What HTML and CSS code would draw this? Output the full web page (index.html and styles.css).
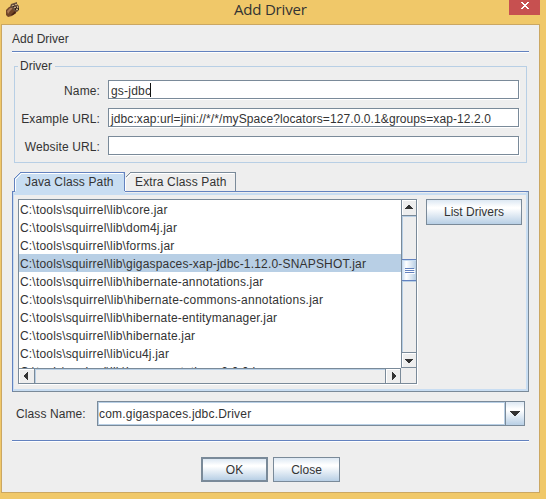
FILE: index.html
```
<!DOCTYPE html>
<html lang="en">
<head>
<meta charset="utf-8">
<title>Add Driver</title>
<link rel="stylesheet" href="styles.css">
</head>
<body>
<div class="window">
  <header class="titlebar">
    <svg class="acorn" width="16" height="16" viewBox="0 0 16 16">
      <path d="M1 13 L1 8 L4 5 L8 4 L12 8 L11 11 L7 14 L3 15 Z" fill="#704528"/>
      <path d="M2 9 L5 6 L8 6 L5 9 L3 12 Z" fill="#a87958"/>
      <path d="M6 13 L10 9 L11 11 L8 13 Z" fill="#482313"/>
      <path d="M5 5 L6 2 L9 1 L12 0 L12 2 L14 4 L14 8 L12 10 L9 9 L7 6 Z" fill="#69503e"/>
      <path d="M7 3h2v1h-2zM10 2h2v1h-2zM9 5h2v1h-2zM12 4h1v2h-1zM11 7h2v1h-2z" fill="#c5a980"/>
      <path d="M8 4h1v1h-1zM11 5h1v1h-1zM10 6h1v2h-1zM13 6h1v2h-1z" fill="#2f2118"/>
    </svg>
    <h1 class="title"><span>Add Driver</span></h1>
    <div class="win-close"><svg width="8" height="7" viewBox="0 0 8 7" shape-rendering="crispEdges"><path d="M0 0h2v1h1v1h2v-1h1v-1h2v1h-1v1h-1v1h-1v1h1v1h1v1h1v1h-2v-1h-1v-1h-2v1h-1v1h-2v-1h1v-1h1v-1h1v-1h-1v-1h-1v-1h-1z" fill="#fff"/></svg></div>
  </header>
  <main class="client">
    <div class="heading"><span>Add Driver</span></div>
    <section class="group">
      <h2 class="legend">Driver</h2>
      <div class="field"><label>Name:</label><div class="input"><span class="v-name">gs-jdbc</span><i class="caret"></i></div></div>
      <div class="field"><label class="l-example">Example URL:</label><div class="input"><span class="v-url">jdbc:xap:url=jini://*/*/mySpace?locators=127.0.0.1&amp;groups=xap-12.2.0</span></div></div>
      <div class="field"><label class="l-website">Website URL:</label><div class="input"></div></div>
    </section>
    <div class="tabs">
      <svg class="tab-shapes" width="226" height="22" viewBox="0 0 226 22" shape-rendering="crispEdges">
        <path d="M2.5 21V6.500L8.500.5H112.500V21Z" fill="#c8ddf2"/>
        <path d="M3.500 19V7.500L9.500 1.500H111" fill="none" stroke="#fff"/>
        <path d="M2.500 19V6.500L8.500.5H112.500V19" fill="none" stroke="#6382bf"/>
        <path d="M113.500 19V7.500L119.500 1.500H222" fill="none" stroke="#fff"/>
        <path d="M113.500 5.500L118.500.5H223.500V19" fill="none" stroke="#7a8a99"/>
      </svg>
      <div class="tab t-java"><span>Java Class Path</span></div>
      <div class="tab t-extra"><span>Extra Class Path</span></div>
    </div>
    <section class="pane">
      <div class="scroller">
        <ul class="list">
          <li><span>C:\tools\squirrel\lib\core.jar</span></li>
          <li><span>C:\tools\squirrel\lib\dom4j.jar</span></li>
          <li><span>C:\tools\squirrel\lib\forms.jar</span></li>
          <li class="selected"><span>C:\tools\squirrel\lib\gigaspaces-xap-jdbc-1.12.0-SNAPSHOT.jar</span></li>
          <li><span>C:\tools\squirrel\lib\hibernate-annotations.jar</span></li>
          <li class="wide"><span>C:\tools\squirrel\lib\hibernate-commons-annotations.jar</span></li>
          <li><span>C:\tools\squirrel\lib\hibernate-entitymanager.jar</span></li>
          <li><span>C:\tools\squirrel\lib\hibernate.jar</span></li>
          <li><span>C:\tools\squirrel\lib\icu4j.jar</span></li>
          <li><span>C:\tools\squirrel\lib\java-annotations-2.0.0.jar</span></li>
        </ul>
        <div class="vbar">
          <div class="up"><svg width="8" height="4" shape-rendering="crispEdges"><path d="M3 0h2v1h1v1h1v1h1v1H0V3h1V2h1V1h1z" fill="#333"/></svg></div>
          <div class="vtrack"><div class="thumb"><i></i><i></i><i></i></div></div>
          <div class="down"><svg width="8" height="4" shape-rendering="crispEdges"><path d="M0 0h8v1h-1v1h-1v1h-1v1H3V3H2V2H1V1H0z" fill="#333"/></svg></div>
        </div>
        <div class="hbar">
          <div class="left"><svg width="4" height="8" shape-rendering="crispEdges"><path d="M4 0v8H3V7H2V6H1V5H0V3h1V2h1V1h1V0z" fill="#333"/></svg></div>
          <div class="htrack"></div>
          <div class="right"><svg width="4" height="8" shape-rendering="crispEdges"><path d="M0 0h1v1h1v1h1v1h1v2H3v1H2v1H1v1H0z" fill="#333"/></svg></div>
        </div>
        <div class="corner"></div>
      </div>
      <button class="btn list-drivers"><span>List Drivers</span></button>
    </section>
    <div class="class-row">
      <label>Class Name:</label>
      <div class="combo">
        <div class="combo-text"><span>com.gigaspaces.jdbc.Driver</span></div>
        <div class="combo-arrow"><svg width="10" height="5" shape-rendering="crispEdges"><path d="M0 0h10v1H9v1H8v1H7v1H6v1H4V4H3V3H2V2H1V1H0z" fill="#333"/></svg></div>
      </div>
    </div>
    <footer class="actions">
      <button class="btn ok"><span>OK</span></button>
      <button class="btn close"><span>Close</span></button>
    </footer>
  </main>
</div>
</body>
</html>
```
FILE: styles.css
```
* { box-sizing: border-box; }
body {
  margin: 0;
  font: 12px/18px "Liberation Sans", Arial, sans-serif;
  color: #333;
  white-space: nowrap;
}
svg { display: block; }
.window {
  width: 546px;
  height: 499px;
  background: #f0c869;
  padding: 0 6px 6px 1px;
  overflow: hidden;
}
.titlebar { display: flex; height: 24px; }
.acorn { margin: 2px 0 0 4px; }
.title {
  flex: 1;
  margin: 0;
  padding-left: 213px;
  font: 15px/19px "Open Sans", "Noto Sans", sans-serif;
  letter-spacing: -0.2px;
}
.win-close {
  width: 31px;
  height: 15px;
  padding: 2px 0 0 12px;
  background: #c75050;
}
.client {
  width: 539px;
  height: 469px;
  border: 1px solid #cba762;
  background: #eee;
  padding: 0 10px;
}
.heading {
  height: 28px;
  padding-top: 5px;
  border-bottom: 1px solid #fff;
  box-shadow: inset 0 -1px #6382bf;
}
.group {
  height: 97px;
  margin: 13px 2px 0;
  padding: 13px 7px 0 4px;
  border: 1px solid #b8cfe5;
}
.legend {
  width: 37px;
  height: 18px;
  margin: -23px 0 5px -1px;
  padding-left: 2px;
  background: #eee;
  font: inherit;
}
.field { display: flex; height: 19px; margin-bottom: 9px; }
.field label {
  width: 89px;
  padding: 2px 8px 0 0;
  text-align: right;
  letter-spacing: 0.12px;
}
.input {
  display: flex;
  width: 411px;
  height: 19px;
  padding: 1px 0 0 2px;
  background: #fff;
  border: 1px solid #7a8a99;
  box-shadow: 1px 1px #fff;
}
.v-name { letter-spacing: 0.2px; }
.v-url { letter-spacing: 0.1px; }
.caret { width: 1px; height: 14px; background: #111; margin-left: -1px; margin-top: 1px; }
.tabs {
  position: relative;
  display: flex;
  height: 19px;
  margin-top: 9px;
  letter-spacing: 0.13px;
}
.tab-shapes { position: absolute; left: 0; top: 0; z-index: 1; }
.tab { position: relative; z-index: 2; padding-top: 1px; }
.t-java { width: 112px; padding-left: 13px; }
.t-extra { padding-left: 11px; }
.pane {
  display: flex;
  align-items: flex-start;
  height: 201px;
  padding: 5px 4px 0 5px;
  gap: 9px;
  border: 1px solid #7a8a99;
  border-top-color: #6382bf;
  border-left-color: #6382bf;
  box-shadow: inset 1px 0 #c8ddf2, inset -2px -2px #c8ddf2, inset 0 1px #eee, inset 0 3px #c8ddf2;
}
.scroller {
  display: grid;
  grid-template-columns: 382px 16px;
  grid-template-rows: 168px 16px;
  width: 399px;
  height: 185px;
  margin-top: 2px;
  border: 1px solid #7a8a99;
  box-shadow: 1px 1px #fff;
  overflow: hidden;
}
.list {
  height: 168px;
  margin: 0;
  padding: 0;
  overflow: hidden;
  list-style: none;
  background: #fff;
  letter-spacing: 0.185px;
}
.list li { height: 18px; padding: 1px 0 0 1px; }
.list .wide { letter-spacing: 0.225px; }
.list .selected { background: #b8cfe5; }
.vbar {
  display: flex;
  flex-direction: column;
  width: 15px;
  border-left: 1px solid #7a8a99;
}
.up, .down {
  height: 16px;
  padding: 5px 0 0 3px;
  border-bottom: 1px solid #7a8a99;
  box-shadow: inset 1px 1px #fff;
}
.down { border-top: 1px solid #7a8a99; padding-top: 6px; }
.vtrack {
  flex: 1;
  padding-top: 43px;
  box-shadow: inset 1px 1px #b8cfe5;
}
.thumb {
  height: 22px;
  padding: 8px 2px 0 3px;
  border: solid #6382bf;
  border-width: 1px 0;
  background: linear-gradient(90deg, #c8ddf2, #fff 30%, #b8cfe5);
  box-shadow: 0 1px #b8cfe5, inset 1px 1px #c8ddf2;
}
.thumb i {
  display: block;
  width: 9px;
  height: 1px;
  margin-bottom: 1px;
  background: #6382bf;
  box-shadow: 1px 1px #fff;
}
.hbar { display: flex; height: 15px; border-top: 1px solid #7a8a99; }
.left, .right { width: 16px; padding: 3px 0 0 5px; border-right: 1px solid #7a8a99; box-shadow: inset 1px 1px #fff; }
.right { padding-left: 6px; border-left: 1px solid #7a8a99; }
.htrack { flex: 1; box-shadow: inset 1px 1px #b8cfe5; }
.corner { width: 15px; height: 15px; }
.btn {
  height: 26px;
  padding: 0;
  font: inherit;
  color: inherit;
  border: 1px solid #7a8a99;
  background: linear-gradient(#dde8f3, #fff 30%, #fff 35%, #b8cfe5);
}
.list-drivers { width: 96px; margin-top: 2px; }
.class-row { display: flex; height: 25px; margin-top: 9px; }
.class-row label { width: 85px; padding: 4px 0 0 4px; letter-spacing: 0.1px; }
.combo {
  display: flex;
  width: 428px;
  height: 25px;
  border: 1px solid #7a8a99;
}
.combo-text {
  width: 407px;
  padding: 2px 0 0;
  border: 1px solid #b8cfe5;
  background: #fff;
  letter-spacing: 0.19px;
}
.combo-arrow {
  flex: 1;
  padding: 9px 0 0 4px;
  border-left: 1px solid #7a8a99;
  background: linear-gradient(#dde8f3, #fff 30%, #fff 35%, #b8cfe5);
}
.actions {
  display: flex;
  gap: 5px;
  margin-top: 14px;
  padding: 16px 0 0 189px;
  border-top: 1px solid #6382bf;
  box-shadow: inset 0 1px #fff;
}
.actions .btn { width: 67px; height: 25px; }
.actions .ok { border-width: 2px; }
```
